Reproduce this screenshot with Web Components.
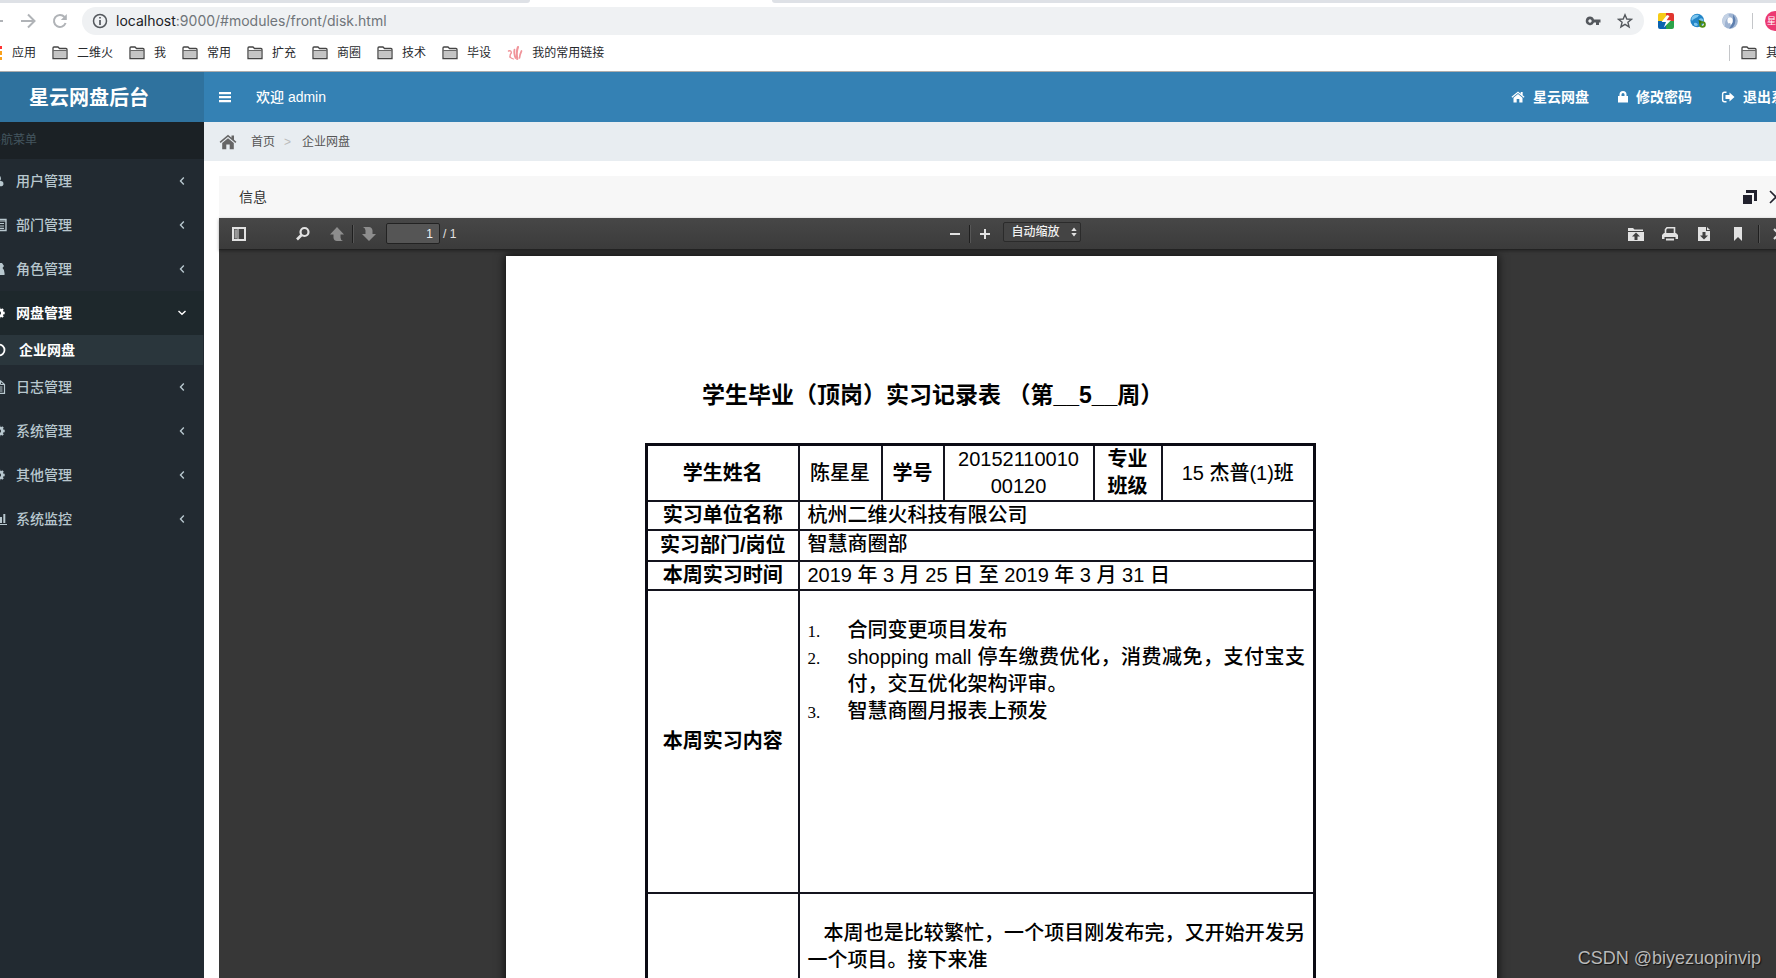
<!DOCTYPE html>
<html lang="zh-CN">
<head>
<meta charset="utf-8">
<title>星云网盘后台</title>
<style>
html,body{margin:0;height:100%;overflow:hidden;background:#fff}
body{font-family:"Liberation Sans","Noto Sans CJK SC",sans-serif;font-size:14px;color:#333}
</style>
</head>
<body>
<disk-app></disk-app>
<script>
const define=(name,html,setup)=>{
  const t=document.createElement('template');
  t.innerHTML=html;
  customElements.define(name,class extends HTMLElement{
    constructor(){
      super();
      this.attachShadow({mode:'open'}).append(t.content.cloneNode(true));
    }
    connectedCallback(){ if(setup) setup(this,this.shadowRoot); }
  });
};

/* name: [viewBox, markup] */
const ICONS={
  back:['0 0 16 16','<path d="M15 8H2M8 1.500L1.500 8L8 14.500" fill="none" stroke="currentColor" stroke-width="2"/>'],
  forward:['0 0 16 16','<path d="M1 8H14M8 1.500L14.500 8L8 14.500" fill="none" stroke="currentColor" stroke-width="2"/>'],
  reload:['0 0 16 16','<path d="M13.600 10A6 6 0 1 1 12.500 4" fill="none" stroke="currentColor" stroke-width="2"/><path d="M14.800 1V7H8.800Z" fill="currentColor"/>'],
  info:['0 0 16 16','<circle cx="8" cy="8" r="6.500" fill="none" stroke="currentColor" stroke-width="1.500"/><path d="M8 7V12M8 4V5.600" stroke="currentColor" stroke-width="1.700"/>'],
  key:['0 0 16 16','<path fill-rule="evenodd" d="M5 3.500A4.300 4.300 0 1 0 9 9.500H11V12H14V9.500H15.500V6.500H9A4.300 4.300 0 0 0 5 3.500ZM5 6.300A1.700 1.700 0 1 1 4.990 6.300Z" fill="currentColor"/>'],
  star:['0 0 16 16','<path d="M8 1.800L9.800 6L14.500 6.300L10.900 9.300L12.100 13.900L8 11.400L3.900 13.900L5.100 9.300L1.500 6.300L6.200 6Z" fill="none" stroke="currentColor" stroke-width="1.400"/>'],
  folder:['0 0 16 16','<path d="M1 13.500V3Q1 2 2 2H6L7.500 3.500H14Q15 3.500 15 4.500V13.500Z" fill="#fff" stroke="#444" stroke-width="1.300"/><path d="M2 6.500H14V12.500H2Z" fill="#c4c4c4"/><path d="M1.500 5.700H14.500" stroke="#444" stroke-width="1"/>'],
  apps:['0 0 16 16','<path d="M1 1h3v3H1zM6 1h3v3H6z" fill="#ea4335"/><path d="M11 1h4v3h-4z" fill="#f33"/><path d="M1 6h3v3H1zM6 6h3v3H6z" fill="#34a853"/><path d="M11 6h4v4h-4zM11 12h4v3h-4z" fill="#f9a11b"/><path d="M1 11h3v3H1zM6 11h3v3H6z" fill="#4285f4"/>'],
  flame:['0 0 16 16','<g fill="none" stroke="#f0949a" stroke-linecap="round"><path d="M1.500 6Q4.500 5 4.300 8Q2.800 9.500 3 12" stroke-width="1.400"/><path d="M3 12Q4.500 13.500 6.500 14" stroke-width="1.100"/><path d="M7.500 4.500Q6.500 8 8.500 13" stroke-width="1.700"/><path d="M11 2Q9 7 10.300 14" stroke-width="2.100"/><path d="M14.500 6Q13 9 12.500 13" stroke-width="1.700"/></g>'],
  bolt:['0 0 16 16','<clipPath id="r"><rect width="16" height="16" rx="2"/></clipPath><g clip-path="url(#r)"><path d="M0 0H8V8H0Z" fill="#f6cb16"/><path d="M8 0H16V8H8Z" fill="#e0352e"/><path d="M0 8H8V16H0Z" fill="#0a63b0"/><path d="M8 8H16V16H8Z" fill="#2ba24a"/></g><path d="M9 2L3.500 9H8L5.800 14.500L13 7.300H8.600L11.500 3Z" fill="#fff"/>'],
  globe:['0 0 16 16','<circle cx="7.200" cy="7.500" r="6.800" fill="#2386c8"/><path d="M3 3Q6 1 9 2Q8 5 5 5.500Q3 6 2 8Q.5 5.500 3 3ZM9 6Q12 4 13.500 7Q12 10 10 9ZM4 10Q7 9 8 12Q6 14 4 12Z" fill="#7cc5ee"/><circle cx="12.500" cy="11.500" r="2.300" fill="none" stroke="#4d8f12" stroke-width="2"/><path d="M8.500 7L12 8L9.500 11Z" fill="#376e0a"/>'],
  swirl:['0 0 16 16','<circle cx="8" cy="8" r="7.800" fill="#9fb4d2"/><path d="M8 .3A7.700 7.700 0 0 0 3 13.800Q2 6 8 4Q5 2 8 .3Z" fill="#c3d1e4"/><path d="M11 1.500Q16 7 11 14Q9 15.500 7 15.500Q12 10 11 1.500Z" fill="#5e7fae"/><path d="M6 5Q9 3 10.500 6Q11.500 10 8.500 12Q9 9 6.500 10.500Q4.500 8 6 5Z" fill="#fff"/>'],
  bars:['0 0 14 14','<path d="M1 2H13V4.200H1ZM1 6H13V8.200H1ZM1 10H13V12.200H1Z" fill="currentColor"/>'],
  home:['0 0 18 16','<path d="M9 .8L.6 7.800L1.600 9L9 2.800L16.400 9L17.400 7.800L15 5.800V1.500H12.500V3.700Z" fill="currentColor"/><path d="M9 4.200L3.200 9V15.200H7.300V10.500H10.700V15.200H14.800V9Z" fill="currentColor"/>'],
  lock:['2 0 10 14','<path fill-rule="evenodd" d="M3.500 6V4.500A3.500 3.500 0 0 1 10.500 4.500V6H12V12.500H2V6ZM5.500 6H8.500V4.500A1.500 1.500 0 0 0 5.500 4.500Z" fill="currentColor"/>'],
  exit:['0 0 14 14','<path d="M5.500 2.300H3.500Q1.600 2.300 1.600 4.200V9.800Q1.600 11.700 3.500 11.700H5.500" fill="none" stroke="currentColor" stroke-width="1.400"/><path d="M8.500 2.500L13.500 7L8.500 11.500V9H4.500V5H8.500Z" fill="currentColor"/>'],
  user:['-1 -1 18 16','<circle cx="7" cy="4" r="3.200" fill="currentColor"/><path d="M1 13Q.5 7 4 7H10Q13.500 7 13 11Q12.500 13 11 13Z" fill="currentColor"/>'],
  list:['0 0 16 14','<path d="M1 1.500H15V12.500H1Z" fill="none" stroke="currentColor" stroke-width="1.400"/><path d="M1 3H15M3 5.500H5M6.500 5.500H13M3 8H5M6.500 8H13M3 10.300H5M6.500 10.300H13" stroke="currentColor" stroke-width="1.200"/>'],
  role:['0 0 14 14','<path d="M4 1H10L12 4L10.500 6Q13 8 12.500 13H1.500Q1 8 3.500 6L2 4Z" fill="currentColor"/>'],
  gear:['-1 -1 16 16','<circle cx="7" cy="7" r="3.800" fill="none" stroke="currentColor" stroke-width="3"/><path d="M7 .5V3M7 11V13.500M.5 7H3M11 7H13.500M2.400 2.400L4 4M10 10L11.600 11.600M2.400 11.600L4 10M10 4L11.600 2.400" stroke="currentColor" stroke-width="2.600"/>'],
  ring:['0 0 14 14','<circle cx="7" cy="7" r="5.500" fill="none" stroke="currentColor" stroke-width="1.800"/>'],
  file:['0 0 14 14','<path d="M2 .8H8.500L12.500 4.500V13.300H2Z" fill="none" stroke="currentColor" stroke-width="1.200"/><path d="M8.500 1V4.500H12M4 7H10.500M4 9H10.500M4 11H10.500" fill="none" stroke="currentColor"/>'],
  chart:['0 0 16 14','<path d="M1 0V12.500H16" fill="none" stroke="currentColor" stroke-width="1.200"/><path d="M3 7H5V11H3ZM6 4H8V11H6ZM9 5H11V11H9ZM12.300 2H14.300V11H12.300Z" fill="currentColor"/>'],
  left:['0 0 14 14','<path d="M8.800 3.500L5.500 7L8.800 10.500" fill="none" stroke="currentColor" stroke-width="1.400"/>'],
  down:['0 0 14 14','<path d="M3.500 5L7 8.300L10.500 5" fill="none" stroke="currentColor" stroke-width="1.400"/>'],
  restore:['0 0 16 16','<path d="M4 1H15V12H12V4H4Z" fill="#22222e"/><path d="M1 6H10V15H1Z" fill="#22222e"/>'],
  close:['0 0 16 16','<path d="M2 2L14 14M14 2L2 14" stroke="#22222e" stroke-width="1.600"/>'],
  panel:['0 0 16 16','<path d="M2 2H14V14H2Z" fill="none" stroke="currentColor" stroke-width="2"/><path d="M3.500 3.500H6V12.500H3.500Z" fill="#999"/><path d="M7 3V13" stroke="currentColor"/>'],
  search:['0 0 16 16','<circle cx="9.500" cy="6" r="4" fill="none" stroke="currentColor" stroke-width="2.200"/><path d="M6.500 9L2 13.500" stroke="currentColor" stroke-width="2.600"/>'],
  up:['0 0 16 16','<path d="M8 1L1 8.500H4.500V12Q5 15 8 15H14Q11.500 14 11.500 11.500V8.500H15Z" fill="#8d8d8d"/>'],
  dn:['0 0 16 16','<path d="M8 15L15 8H11.500V4.500Q11 1 8 1H2Q4.500 2 4.500 4.500V8H1Z" fill="#8d8d8d"/>'],
  minus:['0 0 16 16','<path d="M3 8H13" stroke="currentColor" stroke-width="2"/>'],
  plus:['0 0 16 16','<path d="M3 8H13M8 3V13" stroke="currentColor" stroke-width="2"/>'],
  open:['0 0 16 16','<path fill-rule="evenodd" d="M0 4V2H5L6.500 3.500H15V5H0ZM0 6H16V15H0ZM8 6.500L4 10.500H6.500V14H9.500V10.500H12Z" fill="currentColor"/>'],
  print:['0 0 16 16','<path d="M3.500 7V3.500L5 1.800H12.500V7" fill="none" stroke="currentColor" stroke-width="1.600"/><path fill-rule="evenodd" d="M2 7H14L16 9V13H13.500V11H2.500V13H0V9Z" fill="currentColor"/><path d="M4 13.500H12" stroke="currentColor" stroke-width="2"/>'],
  save:['0 0 16 16','<path fill-rule="evenodd" d="M2 1H10V5H14V15H2ZM6.500 6V9.500H4L8 13.500L12 9.500H9.500V6Z" fill="currentColor"/><path d="M11 1L14 4H11Z" fill="currentColor"/>'],
  mark:['0 0 16 16','<path d="M4 1H12V15L8 11L4 15Z" fill="currentColor"/>'],
  more:['0 0 16 16','<path d="M2 3L7 8L2 13M8 3L13 8L8 13" fill="none" stroke="currentColor" stroke-width="2.200"/>'],
  updown:['0 0 8 12','<path d="M4 1.500L6.700 5H1.300ZM4 10.500L1.300 7H6.700Z" fill="#e0e0e0"/>']
};
define('ui-icon',`<style>:host{display:inline-flex;flex:none;width:16px;height:16px}svg{width:100%;height:100%;display:block}</style><svg aria-hidden="true"></svg>`,(el,r)=>{
  const [box,body]=ICONS[el.getAttribute('name')];
  const s=r.querySelector('svg');
  s.setAttribute('viewBox',box);
  s.innerHTML=body;
});

define('bookmark-link',`<style>
:host{display:block;flex:none}
a{display:flex;align-items:center;gap:9px;color:#27292d;text-decoration:none;font-size:12px;line-height:20px;white-space:nowrap}
</style><a href="#"><ui-icon></ui-icon><slot></slot></a>`);

define('browser-bar',`<style>
:host{display:block;background:#fff;border-bottom:1px solid #adadad;height:71px;overflow:hidden;font-family:Roboto,"Noto Sans CJK SC",sans-serif}
.tabs{height:3px;display:flex}
.tabs i{background:#dee1e6;width:530px;border-radius:0 0 6px 0}
.tabs i+i{flex:1;margin-left:242px;border-radius:0 0 0 6px}
.bar{display:flex;align-items:center;height:28px;margin:4px -12px 0 -12px;color:#b0b3b7}
button{border:0;background:none;padding:0;margin:0;color:inherit;display:flex}
.nav{display:flex;gap:16px;padding-right:14px}
.omni{flex:1;display:flex;align-items:center;gap:8px;height:28px;background:#eff1f3;border-radius:14px;padding:0 11px 0 10px;color:#54585d}
.url{flex:1;font-family:Inter,Roboto,sans-serif;font-size:14px;line-height:20px;color:#70757a}
.url b{font-weight:400;color:#202124}
.omni button+button{margin-left:8px}
.ext{display:flex;gap:16px;align-items:center;padding-left:14px}
.sep{width:1px;height:16px;background:#c4c6c9}
.ext .sep{margin-left:-2px}
.me{box-sizing:border-box;width:23px;height:20px;border-radius:10px;background:#ec3a72;color:#fff;font-size:9px;line-height:20px;padding-left:2px;white-space:nowrap;margin-left:-4px}
.marks{display:flex;align-items:center;gap:16px;height:20px;margin:8px -14px 0 -13px}
.marks .sep{margin-left:auto;margin-right:-5px}
</style>
<div class="tabs"><i></i><i></i></div>
<div class="bar">
 <div class="nav"><button aria-label="后退"><ui-icon name="back"></ui-icon></button><button aria-label="前进"><ui-icon name="forward"></ui-icon></button><button aria-label="刷新"><ui-icon name="reload"></ui-icon></button></div>
 <div class="omni"><ui-icon name="info"></ui-icon><span class="url"><b>localhost</b>:9000/#modules/front/disk.html</span><button aria-label="密码"><ui-icon name="key"></ui-icon></button><button aria-label="收藏"><ui-icon name="star"></ui-icon></button></div>
 <div class="ext"><ui-icon name="bolt"></ui-icon><ui-icon name="globe"></ui-icon><ui-icon name="swirl"></ui-icon><span class="sep"></span><span class="me">星云</span></div>
</div>
<div class="marks"></div>`,(el,r)=>{
  const m=r.querySelector('.marks');
  if(m.children.length) return;
  const add=(icon,text)=>{
    const b=document.createElement('bookmark-link');
    b.textContent=text;
    b.shadowRoot.querySelector('ui-icon').setAttribute('name',icon);
    m.append(b);
  };
  add('apps','应用');
  ['二维火','我','常用','扩充','商圈','技术','毕设'].forEach(t=>add('folder',t));
  add('flame','我的常用链接');
  const s=document.createElement('span'); s.className='sep'; m.append(s);
  add('folder','其他');
});

define('app-header',`<style>
:host{display:flex;height:50px;background:#3481b4;color:#fff;font-weight:500;flex:none}
.logo{width:230px;box-sizing:border-box;background:#2f729e;color:#fff;font-size:20px;font-weight:700;line-height:52px;text-align:center;text-decoration:none}
.row{flex:1;display:flex;align-items:center;padding-left:14px;line-height:20px}
button{border:0;background:none;color:inherit;padding:0;display:flex;margin-right:24px}
ui-icon{width:14px;height:14px}
.lock{width:10px}
nav{margin-left:auto;display:flex;gap:29px}
nav a{display:flex;align-items:center;gap:8px;color:#fff;text-decoration:none;white-space:nowrap;font-weight:700}
</style>
<a class="logo" href="#">星云网盘后台</a>
<div class="row"><button aria-label="菜单"><ui-icon name="bars"></ui-icon></button><span>欢迎 admin</span>
<nav><a href="#"><ui-icon name="home"></ui-icon>星云网盘</a><a href="#"><ui-icon class="lock" name="lock"></ui-icon>修改密码</a><a href="#"><ui-icon name="exit"></ui-icon>退出系统</a></nav></div>`);

define('side-item',`<style>
:host{display:block;color:#b8c7ce}
a{display:flex;align-items:center;height:44px;padding:0 15px;color:inherit;text-decoration:none;line-height:20px;font-weight:500}
.i{width:20px;height:14px;margin-right:7px}
.a{width:14px;height:14px;margin-left:auto}
:host([open]){color:#fff;background:#1e282c}
:host([open]) a,:host([sub]) a{font-weight:700}
:host([sub]){color:#fff;background:#2a363c;margin-right:1px}
:host([sub]) a{height:30px}
:host([sub]) .i{margin-right:10px}
</style><a href="#"><ui-icon class="i"></ui-icon><slot></slot></a>`,(el,r)=>{
  const a=r.querySelector('a');
  if(!el.hasAttribute('sub')&&!r.querySelector('.a')){
    const c=document.createElement('ui-icon');
    c.className='a';
    c.setAttribute('name',el.hasAttribute('open')?'down':'left');
    a.append(c);
  }
});

define('side-menu',`<style>
:host{display:block;width:230px;flex:none;background:#222a31}
h2{margin:0;height:37px;box-sizing:border-box;background:#1b2125;color:#44565f;font-size:12px;font-weight:400;line-height:36px;padding-left:15px}
</style><h2>导航菜单</h2><nav></nav>`,(el,r)=>{
  const n=r.querySelector('nav');
  if(n.children.length) return;
  [['user','用户管理'],['list','部门管理'],['role','角色管理'],['gear','网盘管理','open'],['ring','企业网盘','sub'],['file','日志管理'],['gear','系统管理'],['gear','其他管理'],['chart','系统监控']].forEach(([ic,t,flag])=>{
    const s=document.createElement('side-item');
    s.textContent=t;
    if(flag) s.setAttribute(flag,'');
    s.shadowRoot.querySelector('.i').setAttribute('name',ic);
    n.append(s);
  });
});

define('crumb-bar',`<style>
:host{display:flex;align-items:center;height:39px;background:#e8edf1;padding-left:15px;font-size:12px;line-height:20px;color:#555}
a{color:#555;text-decoration:none;display:flex;align-items:center}
ui-icon{width:18px;height:16px;margin-right:14px;color:#666}
i{font-style:normal;color:#bbb;margin:0 11px 0 9px}
</style><a href="#"><ui-icon name="home"></ui-icon>首页</a><i>&gt;</i><span>企业网盘</span>`);

define('report-sheet',`<style>
:host{display:block;box-sizing:border-box;width:991px;margin:6px auto 0;background:#fff;color:#000;box-shadow:0 0 9px 1px rgba(0,0,0,.75);padding:123px 181px 200px 139px;font-size:20px;line-height:27px;font-weight:500}
h1{margin:0 0 32px 57px;font-size:23px;line-height:32px;font-weight:700;white-space:nowrap}
table{border-collapse:collapse;table-layout:fixed;width:100%;border:3px solid #0b0b14}
td,th{border:2px solid #14141e;padding:0;text-align:center;font-weight:500}
th{font-weight:700}
.v{text-align:left;padding:0 8px}
.one{height:54px}.two{height:26px}.three{height:31px}.week{height:303px}
.three .v{vertical-align:top}
.week .v,.sum .v{vertical-align:top;padding-top:26px;text-align:justify}
.sum{height:303px}
ol{margin:0;padding-left:40px;list-style:none}
li{display:block}
li span{float:left;margin-left:-40px;font:17px/29px "Liberation Serif",serif}
p{margin:0;text-indent:16px}
</style>
<h1>学生毕业（顶岗）实习记录表 （第__5__周）</h1>
<table>
<colgroup><col style="width:152px"><col style="width:83px"><col style="width:62px"><col style="width:150px"><col style="width:68px"><col></colgroup>
<tr class="one"><th>学生姓名</th><td>陈星星</td><th>学号</th><td>20152110010<br>00120</td><th>专业<br>班级</th><td>15 杰普(1)班</td></tr>
<tr class="two"><th>实习单位名称</th><td class="v" colspan="5">杭州二维火科技有限公司</td></tr>
<tr class="three"><th>实习部门/岗位</th><td class="v" colspan="5">智慧商圈部</td></tr>
<tr class="two"><th>本周实习时间</th><td class="v" colspan="5">2019 年 3 月 25 日 至 2019 年 3 月 31 日</td></tr>
<tr class="week"><th>本周实习内容</th><td class="v" colspan="5"><ol><li><span>1.</span>合同变更项目发布</li><li><span>2.</span>shopping mall 停车缴费优化，消费减免，支付宝支付，交互优化架构评审。</li><li><span>3.</span>智慧商圈月报表上预发</li></ol></td></tr>
<tr class="sum"><th></th><td class="v" colspan="5"><p>本周也是比较繁忙，一个项目刚发布完，又开始开发另一个项目。接下来准</p></td></tr>
</table>`);

define('pdf-viewer',`<style>
:host{display:flex;flex-direction:column;flex:1;min-height:0;background:#373737}
.bar{display:grid;grid-template-columns:1fr auto 1fr;align-items:center;height:31px;background:linear-gradient(#474747,#3b3b3b);border-bottom:1px solid #222;color:#e2e2e2;font-size:12px;flex:none;font-weight:500;position:relative;box-shadow:0 1px 3px rgba(0,0,0,.35)}
.g{display:flex;align-items:center}
.l{padding-left:12px}
.r{justify-content:flex-end;gap:18px;margin-right:-4px}
.c{padding-left:24px}
button{border:0;background:none;padding:0;color:inherit;display:flex}
.find{margin:0 18px 0 48px}
.sep{width:1px;height:18px;background:#1f1f1f;border-right:1px solid #565656}
.l .sep{margin:0 7px}
.c .sep{margin:0 6px}
.r .sep{margin:0 -6px}
input{width:54px;height:21px;box-sizing:border-box;margin:0 3px 0 9px;padding:0 6px;border:1px solid #222;border-radius:2px;background:#555;color:#f2f2f2;font:500 12px "Liberation Sans",sans-serif;text-align:right}
.zoom{display:grid;margin:0 0 3px 10px;align-items:center}
.zoom>*{grid-area:1/1}
.zoom ui-icon{justify-self:end;width:8px;height:12px;margin-right:3px;pointer-events:none}
select{appearance:none;width:78px;height:20px;box-sizing:border-box;padding:0 0 0 8px;border:1px solid #2b2b2b;border-radius:2px;background:#444;color:#f0f0f0;font:500 12px/18px "Liberation Sans","Noto Sans CJK SC",sans-serif}
.body{flex:1;min-height:0;overflow:hidden}
</style>
<div class="bar">
<div class="g l"><button aria-label="侧栏"><ui-icon name="panel"></ui-icon></button><button class="find" aria-label="查找"><ui-icon name="search"></ui-icon></button><button aria-label="上一页"><ui-icon name="up"></ui-icon></button><span class="sep"></span><button aria-label="下一页"><ui-icon name="dn"></ui-icon></button><input aria-label="页码" value="1"><span>/ 1</span></div>
<div class="g c"><button aria-label="缩小"><ui-icon name="minus"></ui-icon></button><span class="sep"></span><button aria-label="放大"><ui-icon name="plus"></ui-icon></button><div class="zoom"><select aria-label="缩放"><option>自动缩放</option></select><ui-icon name="updown"></ui-icon></div></div>
<div class="g r"><button aria-label="打开"><ui-icon name="open"></ui-icon></button><button aria-label="打印"><ui-icon name="print"></ui-icon></button><button aria-label="下载"><ui-icon name="save"></ui-icon></button><button aria-label="书签"><ui-icon name="mark"></ui-icon></button><span class="sep"></span><button aria-label="更多"><ui-icon name="more"></ui-icon></button></div>
</div>
<div class="body"><slot></slot></div>`);

define('info-panel',`<style>
:host{display:flex;flex-direction:column;flex:1;min-height:0;margin:15px 15px 0}
header{display:flex;align-items:center;height:42px;background:#f7f7f7;padding:0 0 0 20px;color:#333;flex:none}
h3{margin:0;font-size:14px;font-weight:400;line-height:20px;flex:1}
button{border:0;background:none;padding:0;display:flex;margin-left:10px}
</style><header><h3>信息</h3><button aria-label="还原"><ui-icon name="restore"></ui-icon></button><button aria-label="关闭"><ui-icon name="close"></ui-icon></button></header><slot></slot>`);

define('water-mark',`<style>
:host{position:absolute;right:15px;bottom:8px;font-size:18px;line-height:24px;color:#b9b9b9;text-shadow:1px 1px 1px #111}
</style><slot></slot>`);

define('disk-app',`<style>
:host{display:flex;flex-direction:column;height:100vh;overflow:hidden;position:relative}
.page{flex:1;min-height:0;display:flex;flex-direction:column;margin:0 -23px 0 -26px}
.cols{flex:1;min-height:0;display:flex}
main{flex:1;min-width:0;display:flex;flex-direction:column;background:#fff}
</style>
<browser-bar></browser-bar>
<div class="page"><app-header></app-header>
<div class="cols"><side-menu></side-menu>
<main><crumb-bar></crumb-bar><info-panel><pdf-viewer><report-sheet></report-sheet></pdf-viewer></info-panel></main></div></div>
<water-mark>CSDN @biyezuopinvip</water-mark>`);
</script>
</body>
</html>
